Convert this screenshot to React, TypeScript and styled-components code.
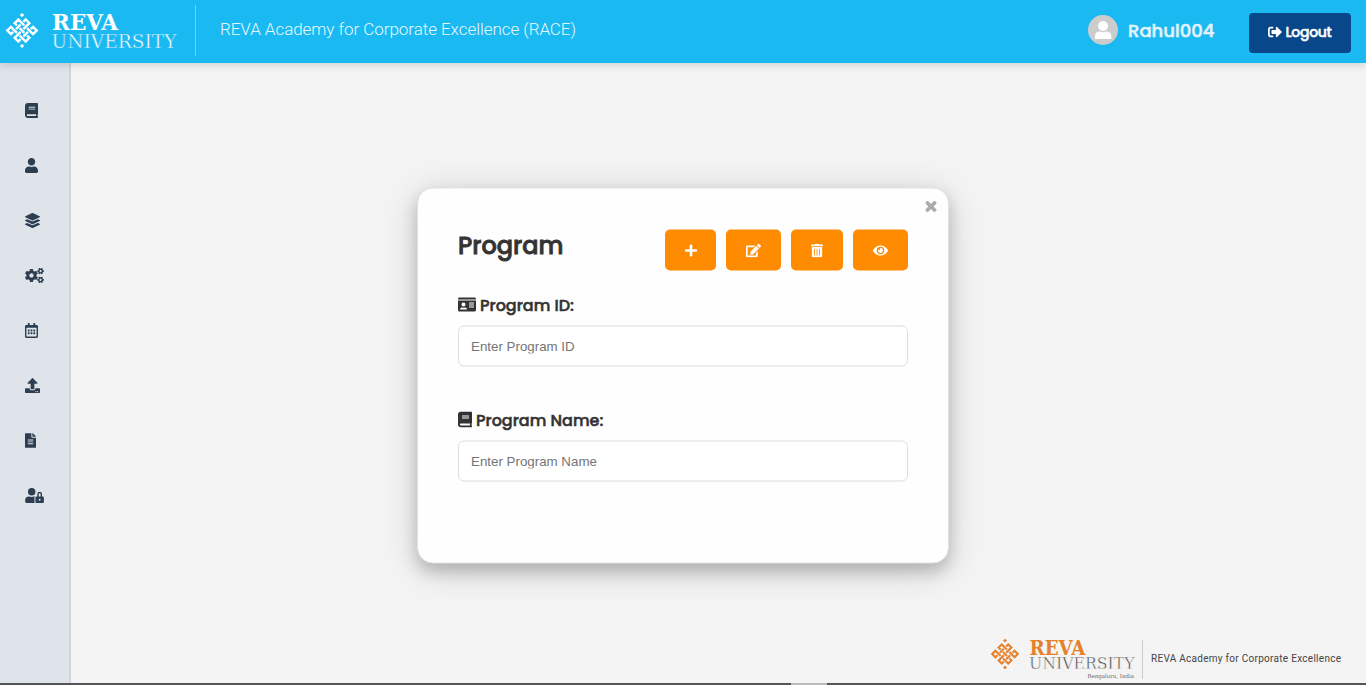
import React from 'react';
import styled, { createGlobalStyle } from 'styled-components';
import {
  FaBook, FaUser, FaLayerGroup, FaCogs, FaRegCalendarAlt, FaUpload, FaFileAlt, FaUserLock,
  FaSignOutAlt, FaPlus, FaEdit, FaTrashAlt, FaEye, FaTimes, FaIdCard,
} from 'react-icons/fa';

const GlobalStyle = createGlobalStyle`
  * { box-sizing: border-box; }
  body { margin: 0; background: #f4f4f4; font-family: Poppins, Inter, "Liberation Sans", sans-serif; overflow: hidden; }
`;

const Page = styled.div`
  height: 685px;
  display: flex;
  flex-direction: column;
`;

const Header = styled.header`
  height: 63px;
  flex: none;
  display: flex;
  align-items: flex-start;
  background: #1ab9f1;
  box-shadow: 0 2px 8px rgba(0, 0, 0, 0.15);
  z-index: 1;
`;

const HeaderLogo = styled.svg`
  width: 196px;
  height: 63px;
  flex: none;
`;

const HeaderTitle = styled.span`
  margin: 18px 0 0 24px;
  font: 300 17px/22px Roboto, sans-serif;
  letter-spacing: -0.05px;
  color: #fff;
  opacity: 0.9;
  flex: 1;
`;

const Avatar = styled.svg`
  width: 30px;
  height: 30px;
  margin-top: 15px;
`;

const UserName = styled.span`
  width: 87px;
  margin: 16px 34px 0 10px;
  font-size: 18px;
  line-height: 29px;
  font-weight: 500;
  -webkit-text-stroke: 0.5px #e3f3fb;
  color: #e3f3fb;
  white-space: nowrap;
`;

const LogoutButton = styled.button`
  width: 102px;
  height: 40px;
  margin: 13px 15px 0 0;
  padding: 0 0 2px;
  border: 0;
  border-radius: 4px;
  background: #07478a;
  color: #fff;
  display: flex;
  align-items: center;
  justify-content: center;
  gap: 3px;
  font: 500 14px/20px Poppins, Inter, sans-serif;
  letter-spacing: -0.3px;
  -webkit-text-stroke: 0.5px #fff;
`;

const Body = styled.div`
  flex: 1;
  display: flex;
`;

const Sidebar = styled.nav`
  width: 71px;
  padding: 20px 0 0 25px;
  background: #dfe4eb;
  border-right: 2px solid #cbd5dc;
`;

const NavItem = styled.a<{ $width: number }>`
  height: 55px;
  display: flex;
  align-items: center;
  color: #2c3e50;
  svg { width: ${(p) => p.$width}px; height: 15px; }
`;

const Main = styled.main`
  flex: 1;
  display: flex;
  flex-direction: column;
  justify-content: space-between;
`;

const Card = styled.section`
  width: 532px;
  height: 376px;
  margin: 124px 0 0 346px;
  padding: 13px 12px 0 40px;
  background: #fefefe;
  border: 1px solid #e2e2e2;
  border-radius: 16px;
  box-shadow: 0 8px 16px rgba(0, 0, 0, 0.2), 0 6px 40px rgba(0, 0, 0, 0.14);
  transform: translateY(0.5px);
`;

const CloseRow = styled.div`
  height: 11px;
  display: flex;
  justify-content: flex-end;
  color: #aaa;
  svg { width: 10px; height: 16px; margin-top: -3px; stroke: #aaa; stroke-width: 36px; overflow: visible; }
`;

const CardContent = styled.div`
  width: 450px;
`;

const CardHeader = styled.div`
  display: flex;
  justify-content: space-between;
  margin-top: 17px;
  height: 41px;
`;

const Title = styled.h2`
  margin: 0;
  font-size: 24px;
  line-height: 31px;
  font-weight: 500;
  -webkit-text-stroke: 0.8px #333;
  color: #333;
`;

const Actions = styled.div`
  display: flex;
  gap: 10px;
`;

const ActionButton = styled.button<{ $width: number; $icon: number }>`
  width: ${(p) => p.$width}px;
  height: 41px;
  padding: 0;
  border: 0;
  border-radius: 5px;
  background: #ff8c00;
  color: #fff;
  display: flex;
  align-items: center;
  justify-content: center;
  svg { width: ${(p) => p.$icon}px; height: 14px; }
`;

const Field = styled.div<{ $top: number }>`
  margin-top: ${(p) => p.$top}px;
`;

const Label = styled.label<{ $icon: number }>`
  height: 24px;
  display: flex;
  align-items: center;
  gap: 4px;
  color: #333;
  font-size: 16px;
  font-weight: 500;
  -webkit-text-stroke: 0.5px #333;
  white-space: nowrap;
  svg { width: ${(p) => p.$icon}px; height: 16px; }
`;

const Input = styled.input`
  display: block;
  width: 450px;
  height: 41px;
  margin-top: 9px;
  padding: 0 12px;
  border: 1px solid #ddd;
  border-radius: 6px;
  background: #fff;
  font: 13.33px "Liberation Sans", Arial, sans-serif;
  &::placeholder { color: #757575; opacity: 1; }
`;

const Footer = styled.footer`
  height: 48px;
  padding-right: 24px;
  display: flex;
  justify-content: flex-end;
`;

const FooterLogo = styled.svg`
  width: 155px;
  height: 46px;
`;

const FooterText = styled.span`
  width: 199px;
  margin-top: 17px;
  padding-left: 8px;
  font: 400 10px/14px Roboto, sans-serif;
  letter-spacing: 0.28px;
  color: #444;
  white-space: nowrap;
`;

const BottomBar = styled.div`
  height: 2px;
  flex: none;
  display: flex;
  background: #555557;
`;

const BarHandle = styled.div`
  width: 36px;
  margin-left: 791px;
  background: #bbb;
`;

/* Woven diamond emblem centred on the origin: two sets of three strands with looped ends */
const Emblem = ({ color }: { color: string }) => (
  <g fill="none" stroke={color} strokeWidth="2.4">
    <g transform="rotate(45)">
      <path d="M-1.9 -5.2H-10.4V0H-7.1 M-3.3 0H3.3 M7.1 0H10.4V5.2H1.9 M-1.9 5.2H-10.4V10.4H-5.2V7.1 M1.9 -5.2H10.4V-10.4H5.2V-7.1" />
      <path d="M-5.2 -7.1V-10.4H0V-1.9 M-5.2 -3.3V3.3 M5.2 -3.3V3.3 M0 1.9V10.4H5.2V7.1" />
    </g>
    <path fill={color} stroke="none" d="M0 -17.6L2.2 -15.4L0 -13.2L-2.2 -15.4Z M0 17.6L2.2 15.4L0 13.2L-2.2 15.4Z" />
  </g>
);

const SLAB = '"DejaVu Serif", serif';

const NAV = [
  { Icon: FaBook, width: 13 },
  { Icon: FaUser, width: 13 },
  { Icon: FaLayerGroup, width: 15 },
  { Icon: FaCogs, width: 19 },
  { Icon: FaRegCalendarAlt, width: 13 },
  { Icon: FaUpload, width: 15 },
  { Icon: FaFileAlt, width: 11 },
  { Icon: FaUserLock, width: 19 },
];

export default function App() {
  return (
    <Page>
      <GlobalStyle />
      <Header>
        <HeaderLogo viewBox="0 0 196 63">
          <g transform="translate(22 30.5)"><Emblem color="#fff" /></g>
          <text x="52" y="29.5" fill="#fff" fontFamily={SLAB} fontWeight="700" fontSize="21.5" textLength="66" lengthAdjust="spacingAndGlyphs">REVA</text>
          <text x="51.5" y="48" fill="#fff" stroke="#1ab9f1" strokeWidth="0.5" fontFamily={SLAB} fontSize="19" textLength="125" lengthAdjust="spacingAndGlyphs">UNIVERSITY</text>
          <path d="M195.5 5V56" stroke="#6bd2f6" />
        </HeaderLogo>
        <HeaderTitle>REVA Academy for Corporate Excellence (RACE)</HeaderTitle>
        <Avatar viewBox="0 0 30 30">
          <circle cx="15" cy="15" r="15" fill="#ccc" />
          <circle cx="15" cy="11" r="5" fill="#fff" />
          <path fill="#fff" d="M7 24V21.5Q7 16.5 12 16.5Q15 18 18 16.5Q23.3 16.5 23.3 21.5V24Z" />
        </Avatar>
        <UserName>Rahul004</UserName>
        <LogoutButton><FaSignOutAlt />Logout</LogoutButton>
      </Header>
      <Body>
        <Sidebar>
          {NAV.map(({ Icon, width }, i) => <NavItem key={i} $width={width}><Icon /></NavItem>)}
        </Sidebar>
        <Main>
          <Card>
            <CloseRow><FaTimes /></CloseRow>
            <CardContent>
              <CardHeader>
                <Title>Program</Title>
                <Actions>
                  <ActionButton $width={51} $icon={12}><FaPlus /></ActionButton>
                  <ActionButton $width={55} $icon={15}><FaEdit /></ActionButton>
                  <ActionButton $width={52} $icon={12}><FaTrashAlt /></ActionButton>
                  <ActionButton $width={55} $icon={15}><FaEye /></ActionButton>
                </Actions>
              </CardHeader>
              <Field $top={22}>
                <Label $icon={18}><FaIdCard />Program ID:</Label>
                <Input placeholder="Enter Program ID" />
              </Field>
              <Field $top={41}>
                <Label $icon={14}><FaBook />Program Name:</Label>
                <Input placeholder="Enter Program Name" />
              </Field>
            </CardContent>
          </Card>
          <Footer>
            <FooterLogo viewBox="0 0 155 46">
              <g transform="translate(17 19) scale(0.87)"><Emblem color="#e5812b" /></g>
              <text x="41.5" y="19.5" fill="#e5812b" fontFamily={SLAB} fontWeight="700" fontSize="20" textLength="56" lengthAdjust="spacingAndGlyphs">REVA</text>
              <text x="41" y="34" fill="#444" stroke="#f4f4f4" strokeWidth="0.5" fontFamily={SLAB} fontSize="16.5" textLength="105.5" lengthAdjust="spacingAndGlyphs">UNIVERSITY</text>
              <text x="99.5" y="43" fill="#666" fontFamily={SLAB} fontSize="5.5" textLength="46.5" lengthAdjust="spacingAndGlyphs">Bengaluru, India</text>
              <path d="M154.5 5V44" stroke="#ccc" />
            </FooterLogo>
            <FooterText>REVA Academy for Corporate Excellence</FooterText>
          </Footer>
        </Main>
      </Body>
      <BottomBar><BarHandle /></BottomBar>
    </Page>
  );
}
